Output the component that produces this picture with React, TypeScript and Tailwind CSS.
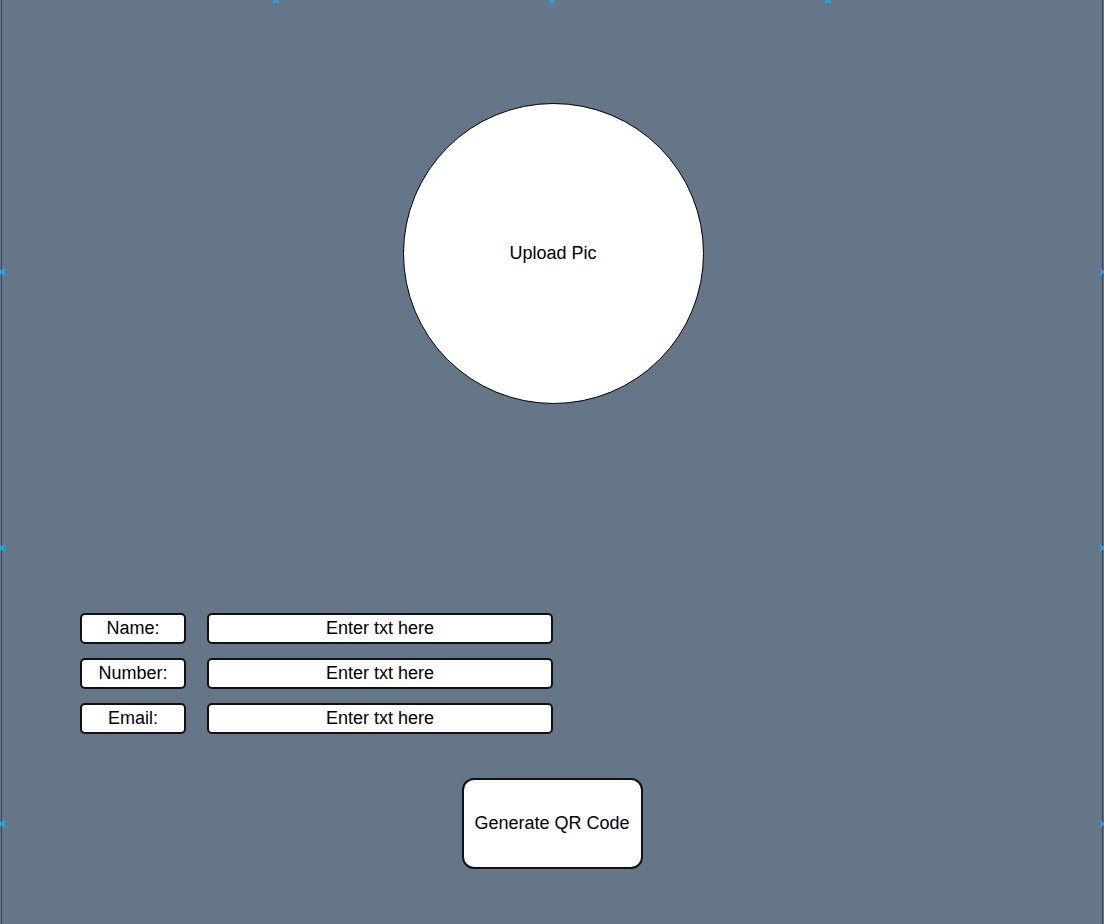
import React from "react";

function Marker({ className }: { className: string }) {
  return (
    <svg
      className={`absolute w-[8px] h-[8px] ${className}`}
      viewBox="0 0 8 8"
    >
      <path d="M1 1 L7 7 M7 1 L1 7" stroke="#29a4e8" strokeWidth="2" />
    </svg>
  );
}

function Row({ label }: { label: string }) {
  return (
    <div className="flex items-center gap-[21px]">
      <div className="w-[106px] h-[31px] bg-white border-2 border-[#111] rounded-[5px] flex items-center justify-center">
        {label}
      </div>
      <div className="w-[346px] h-[31px] bg-white border-2 border-[#111] rounded-[5px] flex items-center justify-center">
        Enter txt here
      </div>
    </div>
  );
}

export default function App() {
  return (
    <div
      className="w-[1104px] h-[924px] overflow-hidden px-px bg-[#647687] text-[18px] text-black"
      style={{ fontFamily: '"Liberation Sans", Arial, sans-serif' }}
    >
      <div className="relative h-full border-x border-[#314354] flex flex-col pt-[103px]">
        <Marker className="left-[270px] -top-[4px]" />
        <Marker className="left-[546px] -top-[4px]" />
        <Marker className="left-[822px] -top-[4px]" />
        <Marker className="-left-[4px] top-[268px]" />
        <Marker className="-left-[4px] top-[544px]" />
        <Marker className="-left-[4px] top-[820px]" />
        <Marker className="-right-[5px] top-[268px]" />
        <Marker className="-right-[5px] top-[544px]" />
        <Marker className="-right-[5px] top-[820px]" />

        <div className="self-center ml-[2px] w-[301px] h-[301px] rounded-full bg-white border-[1.5px] border-black flex items-center justify-center">
          Upload Pic
        </div>

        <div className="mt-[209px] pl-[78px] flex flex-col gap-[14px]">
          <Row label="Name:" />
          <Row label="Number:" />
          <Row label="Email:" />
        </div>

        <div className="mt-[44px] self-center w-[181px] h-[91px] bg-white border-2 border-[#111] rounded-[12px] flex items-center justify-center">
          Generate QR Code
        </div>
      </div>
    </div>
  );
}
